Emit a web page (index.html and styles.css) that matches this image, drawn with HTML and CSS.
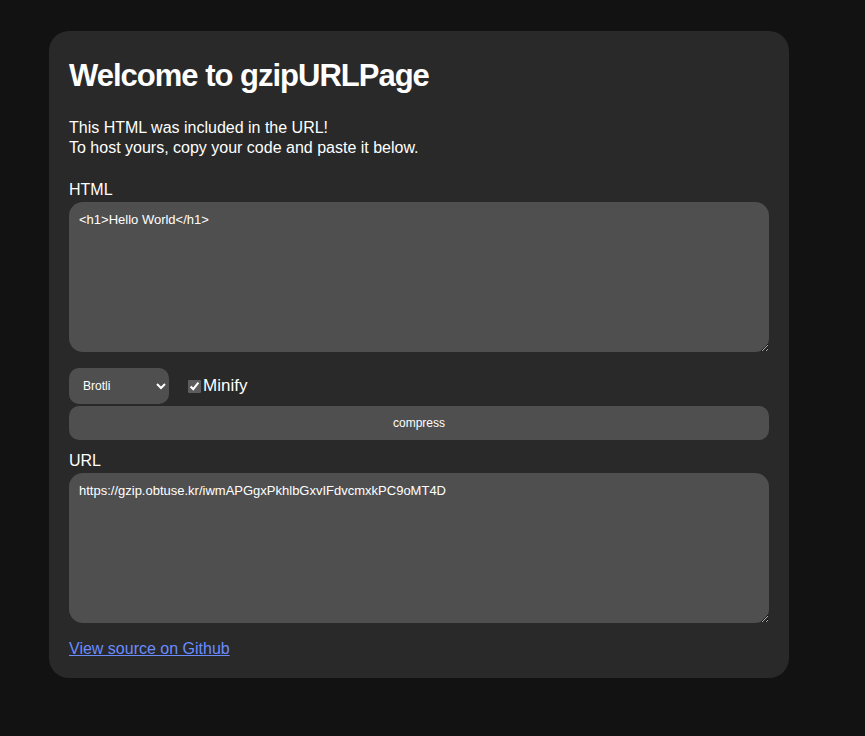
FILE: index.html
```html
<!DOCTYPE html>
<html lang="en">
<head>
    <meta charset="UTF-8">
    <title>gzipURLPage</title>
    <link rel="stylesheet" href="styles.css">
</head>
<body>
    <div class="card">
        <h1 class="title">Welcome to gzipURLPage</h1>
        <p class="intro">This HTML was included in the URL!<br>To host yours, copy your code and paste it below.</p>
        <label class="label" for="html">HTML</label>
        <textarea id="html" class="box">&lt;h1&gt;Hello World&lt;/h1&gt;</textarea>
        <div class="options">
            <select class="algo">
                <option>Brotli</option>
                <option>Gzip</option>
            </select>
            <label class="minify"><input type="checkbox" checked> Minify</label>
        </div>
        <button class="compress">compress</button>
        <label class="label" for="url">URL</label>
        <textarea id="url" class="box">https://gzip.obtuse.kr/iwmAPGgxPkhlbGxvIFdvcmxkPC9oMT4D</textarea>
        <a class="source" href="#">View source on Github</a>
    </div>
</body>
</html>
```

FILE: styles.css
```css
body {
    margin: 0;
    background: #121212;
    color: #fff;
    font-family: "Liberation Sans", Arial, sans-serif;
}

.card {
    width: 700px;
    margin: 31px 0 0 49px;
    padding: 20px 20px 20px;
    background: #292929;
    border-radius: 20px;
    display: flex;
    flex-direction: column;
    align-items: flex-start;
}

.title {
    font-size: 31px;
    margin: 7px 0 24px;
    letter-spacing: -1px;
}

.intro {
    font-size: 16px;
    line-height: 20px;
    margin: 0 0 23px;
}

.label {
    font-size: 16px;
    margin-bottom: 3px;
}

.box {
    box-sizing: border-box;
    width: 700px;
    height: 150px;
    padding: 10px;
    border: none;
    border-radius: 14px;
    background: #4f4f4f;
    color: #fff;
    font-family: "Liberation Sans", Arial, sans-serif;
    font-size: 13px;
    resize: vertical;
}

.options {
    display: flex;
    align-items: center;
    gap: 19px;
    margin: 16px 0 2px;
}

.algo {
    width: 100px;
    height: 36px;
    padding: 0 10px;
    border: none;
    border-radius: 10px;
    background: #4f4f4f;
    color: #fff;
    font-family: "Liberation Sans", Arial, sans-serif;
    font-size: 12px;
}

.minify {
    font-size: 17px;
    display: flex;
    align-items: center;
    gap: 2px;
}

.minify input {
    margin: 0;
    accent-color: #5c5c5c;
}

.compress {
    width: 700px;
    height: 34px;
    border: none;
    border-radius: 10px;
    background: #4f4f4f;
    color: #fff;
    font-family: "Liberation Sans", Arial, sans-serif;
    font-size: 12px;
    margin-bottom: 12px;
}

.source {
    margin-top: 17px;
    font-size: 16px;
    color: #6b8cff;
}
```
